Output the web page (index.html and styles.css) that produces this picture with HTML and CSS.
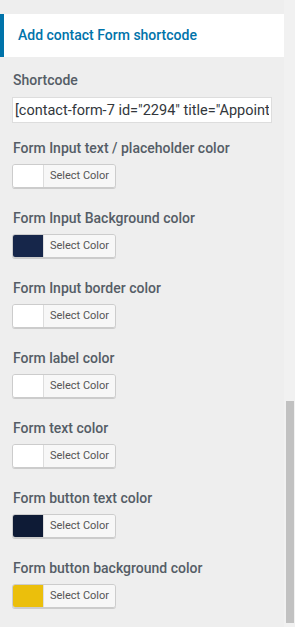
FILE: index.html
```html
<!DOCTYPE html>
<html lang="en">
<head>
    <meta charset="UTF-8">
    <meta name="viewport" content="width=device-width, initial-scale=1.0">
    <title>Contact form settings</title>
    <link rel="stylesheet" href="styles.css">
</head>
<body>
    <div class="wrap">
        <div class="panel">
            <h3 class="section-title">Add contact Form shortcode</h3>

            <div class="field shortcode">
                <label class="field-label">Shortcode</label>
                <input class="text-input" type="text" value='[contact-form-7 id="2294" title="Appointment form"]'>
            </div>

            <div class="field">
                <label class="field-label">Form Input text / placeholder color</label>
                <div class="picker"><span class="swatch white"></span><span class="picker-btn">Select Color</span></div>
            </div>

            <div class="field">
                <label class="field-label">Form Input Background color</label>
                <div class="picker"><span class="swatch navy"></span><span class="picker-btn">Select Color</span></div>
            </div>

            <div class="field">
                <label class="field-label">Form Input border color</label>
                <div class="picker"><span class="swatch white"></span><span class="picker-btn">Select Color</span></div>
            </div>

            <div class="field">
                <label class="field-label">Form label color</label>
                <div class="picker"><span class="swatch white"></span><span class="picker-btn">Select Color</span></div>
            </div>

            <div class="field">
                <label class="field-label">Form text color</label>
                <div class="picker"><span class="swatch white"></span><span class="picker-btn">Select Color</span></div>
            </div>

            <div class="field">
                <label class="field-label">Form button text color</label>
                <div class="picker"><span class="swatch dark"></span><span class="picker-btn">Select Color</span></div>
            </div>

            <div class="field">
                <label class="field-label">Form button background color</label>
                <div class="picker"><span class="swatch yellow"></span><span class="picker-btn">Select Color</span></div>
            </div>
        </div>

        <div class="scroll-track">
            <div class="scroll-thumb"></div>
        </div>
    </div>
</body>
</html>
```

FILE: styles.css
```css
html, body {
    margin: 0;
    padding: 0;
    height: 100%;
}

body {
    font-family: Roboto, "Liberation Sans", Arial, sans-serif;
    background: #eeeeee;
    overflow: hidden;
}

.wrap {
    display: flex;
    height: 627px;
}

.panel {
    width: 284px;
    background: #eeeeee;
    padding-top: 14px;
    box-sizing: border-box;
}

.section-title {
    margin: 0 0 13px 0;
    height: 43px;
    line-height: 43px;
    background: #fff;
    border-left: 4px solid #0073aa;
    padding-left: 14px;
    color: #0073aa;
    font-size: 14px;
    font-weight: 500;
}

.field {
    padding-left: 12px;
    margin-bottom: 20px;
}

.field.shortcode {
    margin-bottom: 15px;
}

.field-label {
    display: block;
    padding-left: 1px;
    font-size: 14px;
    line-height: 20px;
    font-weight: 500;
    color: #555d66;
    margin-bottom: 6px;
}

.text-input {
    display: block;
    width: 260px;
    height: 26px;
    margin: 7px 0 0 0;
    box-sizing: border-box;
    border: 1px solid #dddddd;
    background: #fff;
    padding: 0 2px 0 2px;
    font-family: Roboto, "Liberation Sans", Arial, sans-serif;
    font-size: 14.5px;
    color: #32373c;
    outline: none;
}

.picker {
    display: flex;
    width: 104px;
    height: 24px;
    box-sizing: border-box;
    border: 1px solid #cccccc;
    border-radius: 3px;
    overflow: hidden;
    box-shadow: 0 1px 0 #cccccc;
}

.swatch {
    width: 30px;
    border-right: 1px solid #dddddd;
}

.swatch.white { background: #ffffff; }
.swatch.navy { background: #16264a; }
.swatch.dark { background: #0e1b36; }
.swatch.yellow { background: #ebbf0c; }

.picker-btn {
    flex: 1;
    background: #f7f7f7;
    color: #555555;
    font-size: 11px;
    line-height: 22px;
    text-align: center;
}

.scroll-track {
    width: 11px;
    background: #f1f1f1;
    display: flex;
    flex-direction: column;
    justify-content: flex-end;
}

.scroll-thumb {
    height: 222px;
    margin: 0 1px 4px 2px;
    background: #c1c1c1;
}
```
